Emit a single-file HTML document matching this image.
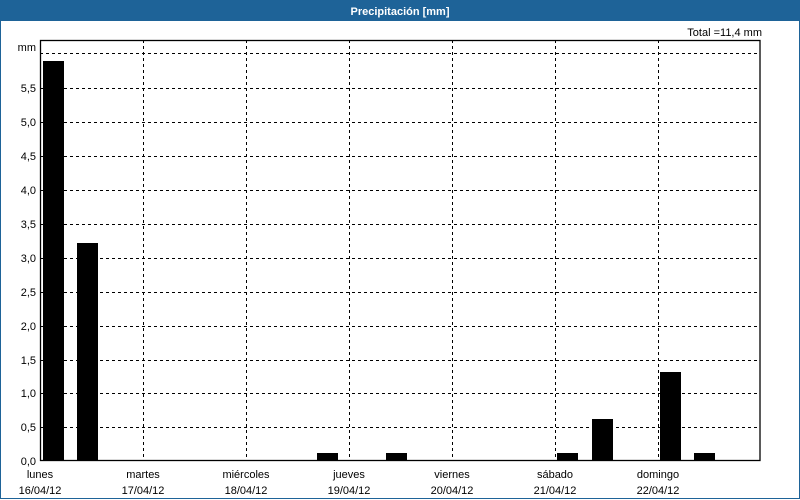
<!DOCTYPE html>
<html><head><style>
html,body{margin:0;padding:0;background:#fff;}
svg{display:block;font-family:"Liberation Sans","DejaVu Sans",sans-serif;}
</style></head><body>
<svg width="800" height="500" viewBox="0 0 800 500" xmlns="http://www.w3.org/2000/svg">
<rect x="0" y="0" width="800" height="500" fill="#fff"/>
<rect x="0" y="0" width="800" height="21" fill="#1e6398"/>
<text x="400" y="15" fill="#fff" font-size="11" font-weight="bold" text-anchor="middle">Precipitación [mm]</text>
<rect x="0.5" y="20.5" width="799" height="478" fill="none" stroke="#1e6398" stroke-width="1"/>
<text x="762" y="36" font-size="11" text-anchor="end" fill="#000">Total =11,4 mm</text>
<text x="36" y="51" font-size="11" text-anchor="end">mm</text>
<g stroke="#000" stroke-width="1" stroke-dasharray="3,3" fill="none">
<line x1="40" y1="53.5" x2="760" y2="53.5"/>
<line x1="40" y1="88.5" x2="760" y2="88.5"/>
<line x1="40" y1="122.5" x2="760" y2="122.5"/>
<line x1="40" y1="156.5" x2="760" y2="156.5"/>
<line x1="40" y1="190.5" x2="760" y2="190.5"/>
<line x1="40" y1="224.5" x2="760" y2="224.5"/>
<line x1="40" y1="258.5" x2="760" y2="258.5"/>
<line x1="40" y1="292.5" x2="760" y2="292.5"/>
<line x1="40" y1="326.5" x2="760" y2="326.5"/>
<line x1="40" y1="360.5" x2="760" y2="360.5"/>
<line x1="40" y1="393.5" x2="760" y2="393.5"/>
<line x1="40" y1="427.5" x2="760" y2="427.5"/>
<line x1="143.5" y1="40" x2="143.5" y2="461"/>
<line x1="246.5" y1="40" x2="246.5" y2="461"/>
<line x1="349.5" y1="40" x2="349.5" y2="461"/>
<line x1="452.5" y1="40" x2="452.5" y2="461"/>
<line x1="555.5" y1="40" x2="555.5" y2="461"/>
<line x1="658.5" y1="40" x2="658.5" y2="461"/>
</g>
<g fill="#000">
<rect x="43" y="61" width="21" height="400"/>
<rect x="77" y="243" width="21" height="218"/>
<rect x="317" y="453" width="21" height="8"/>
<rect x="386" y="453" width="21" height="8"/>
<rect x="557" y="453" width="21" height="8"/>
<rect x="592" y="419" width="21" height="42"/>
<rect x="660" y="372" width="21" height="89"/>
<rect x="694" y="453" width="21" height="8"/>
</g>
<rect x="40.5" y="40.5" width="719.5" height="420" fill="none" stroke="#000" stroke-width="1.3"/>
<g font-size="11" text-anchor="end" fill="#000">
<text x="36" y="92">5,5</text>
<text x="36" y="126">5,0</text>
<text x="36" y="160">4,5</text>
<text x="36" y="194">4,0</text>
<text x="36" y="228">3,5</text>
<text x="36" y="262">3,0</text>
<text x="36" y="296">2,5</text>
<text x="36" y="330">2,0</text>
<text x="36" y="364">1,5</text>
<text x="36" y="397">1,0</text>
<text x="36" y="431">0,5</text>
<text x="36" y="465">0,0</text>
</g>
<g font-size="11" text-anchor="middle" fill="#000">
<text x="40" y="478">lunes</text><text x="40" y="494">16/04/12</text>
<text x="143" y="478">martes</text><text x="143" y="494">17/04/12</text>
<text x="246" y="478">miércoles</text><text x="246" y="494">18/04/12</text>
<text x="349" y="478">jueves</text><text x="349" y="494">19/04/12</text>
<text x="452" y="478">viernes</text><text x="452" y="494">20/04/12</text>
<text x="555" y="478">sábado</text><text x="555" y="494">21/04/12</text>
<text x="658" y="478">domingo</text><text x="658" y="494">22/04/12</text>
</g>
</svg>
</body></html>
